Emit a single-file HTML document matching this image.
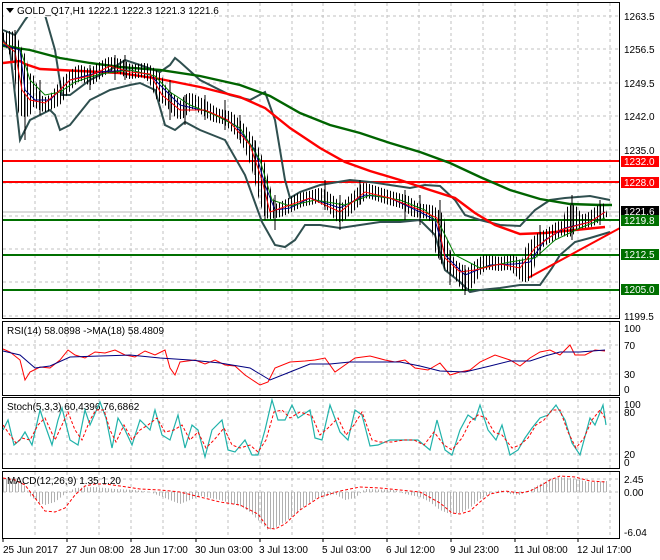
<!DOCTYPE html>
<html><head><meta charset="utf-8"><style>
body{margin:0;background:#fff;width:660px;height:560px;overflow:hidden;font-family:"Liberation Sans",sans-serif}
svg{display:block}
text{font-family:"Liberation Sans",sans-serif;font-size:10px}
</style></head><body>
<svg width="660" height="560" viewBox="0 0 660 560" xmlns="http://www.w3.org/2000/svg">
<defs>
<pattern id="vl" width="3" height="10" patternUnits="userSpaceOnUse"><rect x="0" y="0" width="1" height="10" fill="#000"/></pattern>
<pattern id="gl" width="3" height="10" patternUnits="userSpaceOnUse"><rect x="0" y="0" width="1" height="10" fill="#b0b0b0"/></pattern>
</defs>
<rect width="660" height="560" fill="#fff"/>
<!-- grid -->
<g stroke="#c0c0c0" stroke-dasharray="3,3" stroke-width="1">
<path d="M35 3V318M67 3V318M99 3V318M131 3V318M163 3V318M196 3V318M228 3V318M260 3V318M292 3V318M323 3V318M355 3V318M387 3V318M419 3V318M451 3V318M483 3V318M515 3V318M547 3V318M578 3V318M610 3V318"/>
<path d="M35 322V395M67 322V395M99 322V395M131 322V395M163 322V395M196 322V395M228 322V395M260 322V395M292 322V395M323 322V395M355 322V395M387 322V395M419 322V395M451 322V395M483 322V395M515 322V395M547 322V395M578 322V395M610 322V395"/>
<path d="M35 399V468M67 399V468M99 399V468M131 399V468M163 399V468M196 399V468M228 399V468M260 399V468M292 399V468M323 399V468M355 399V468M387 399V468M419 399V468M451 399V468M483 399V468M515 399V468M547 399V468M578 399V468M610 399V468"/>
<path d="M35 472V538M67 472V538M99 472V538M131 472V538M163 472V538M196 472V538M228 472V538M260 472V538M292 472V538M323 472V538M355 472V538M387 472V538M419 472V538M451 472V538M483 472V538M515 472V538M547 472V538M578 472V538M610 472V538"/>
<path d="M3 16H620M3 49H620M3 83H620M3 116H620M3 150H620M3 183H620M3 216H620M3 249H620M3 282H620M3 316H620"/>
<path d="M3 345H620M3 374H620M3 412H620M3 454H620M3 479H620M3 492H620"/>
</g>
<path d="M3 212H620" stroke="#b8b8b8" stroke-width="1"/>
<!-- horizontal levels -->
<g stroke-width="2">
<path d="M3 161H620M3 182H620" stroke="#ff0000"/>
<path d="M3 220H620M3 255H620M3 290H620" stroke="#007000"/>
</g>
<!-- bollinger bands -->
<g fill="none" stroke="#2f4f4f" stroke-width="2">
<polyline points="3,30 15,35 25,20 35,6 45,15 55,50 62,95 70,95 90,80 110,70 125,60 140,65 160,72 170,65 175,58 180,62 200,80 230,95 250,100 265,92 275,120 285,180 290,198 300,192 320,185 350,180 370,182 390,185 410,188 425,185 440,186 455,200 465,215 480,220 500,225 520,226 535,210 550,200 565,198 590,196 610,200"/>
<polyline points="3,40 10,50 20,140 25,130 30,120 40,115 50,110 55,115 60,130 70,125 90,100 110,90 130,85 140,83 155,90 165,125 175,130 185,122 200,130 225,140 245,175 262,222 275,245 285,247 295,240 305,225 320,225 340,228 360,225 380,222 400,222 420,220 435,235 445,270 460,282 470,292 480,290 500,288 520,285 540,285 552,268 560,255 575,242 590,238 610,232"/>
</g>
<!-- green 200 MA -->
<polyline fill="none" stroke="#006400" stroke-width="2.4" points="3,46 30,50 60,58 90,63 120,67 160,70 200,76 240,85 270,96 300,113 330,125 360,133 390,143 420,152 450,163 480,177 510,190 540,199 570,204 600,205 612,205"/>
<!-- red MA -->
<polyline fill="none" stroke="#ff0000" stroke-width="2.4" points="3,63 20,61 25,64 40,69 80,71 120,73 160,79 200,87 240,97 265,108 290,128 320,148 345,162 370,171 400,180 430,190 455,198 475,213 495,225 520,234 545,233 575,230 605,227"/>
<path d="M528,278 L620,228" stroke="#ff0000" stroke-width="2"/>
<!-- candles via pattern-stroke -->
<polyline fill="none" stroke="url(#vl)" stroke-width="14" stroke-linejoin="round" points="3,40 10,38 15,50 20,60 25,110 28,80 35,100 45,105 55,100 62,90 70,80 80,72 90,78 100,70 110,64 120,66 130,72 145,70 155,78 162,95 170,100 180,112 190,100 200,105 215,115 228,118 240,130 250,145 258,165 265,195 270,212 280,210 290,205 300,200 310,198 320,195 330,202 340,215 350,205 365,190 375,193 390,198 405,202 415,210 430,212 437,218 442,250 450,265 458,270 466,284 475,270 485,262 500,264 512,262 525,275 532,250 540,240 550,235 560,228 568,230 572,212 578,222 590,220 600,212 606,210"/>
<!-- fast MAs -->
<polyline fill="none" stroke="#00008b" stroke-width="1" points="3,45 20,50 25,90 35,100 50,100 60,90 70,80 100,72 130,70 150,75 165,90 180,105 210,112 235,125 255,150 265,185 275,210 290,208 310,198 340,208 365,195 390,198 420,212 435,220 445,255 465,275 490,265 515,264 530,262 545,240 565,228 590,222 605,212"/>
<polyline fill="none" stroke="#008000" stroke-width="1" points="3,44 20,48 30,80 45,95 60,92 75,82 100,74 130,70 155,76 170,92 190,105 215,115 240,128 260,160 272,200 290,206 315,200 345,205 370,195 400,200 425,210 440,225 455,255 480,268 510,262 535,258 555,240 580,228 605,218"/>
<polyline fill="none" stroke="#ff0000" stroke-width="1" points="3,42 15,52 22,90 30,100 45,103 58,92 70,80 90,76 110,66 130,72 150,74 162,95 180,110 205,110 228,120 250,145 262,180 270,212 290,205 310,198 340,212 365,192 390,198 420,210 437,218 445,258 460,272 475,270 500,264 520,268 535,248 560,230 590,222 605,212"/>
<g stroke="#000" stroke-width="1">
<path d="M15 30V70M25 95V140M40 80V115M90 65V90M115 55V80M125 55V80M170 80V120M185 95V125M205 95V120M225 100V130M240 115V140M255 140V175M265 180V220M275 195V230M325 180V210M340 195V230M360 180V205M405 190V220M420 195V225M440 200V260M450 250V285M465 265V295M540 225V255M572 195V240M600 200V225"/>
</g>
<!-- panel borders -->
<g fill="none" stroke="#000" stroke-width="1">
<rect x="2.5" y="2.5" width="617" height="316"/>
<rect x="2.5" y="321.5" width="617" height="74"/>
<rect x="2.5" y="397.5" width="617" height="71"/>
<rect x="2.5" y="471.5" width="617" height="67"/>
</g>
<rect x="4" y="4" width="210" height="13" fill="#fff"/>
<path d="M6 8h8l-4 5z" fill="#000"/>
<text x="17" y="14">GOLD_Q17,H1  1222.1 1222.3 1221.3 1221.6</text>
<g font-size="10" fill="#000">
<text x="624" y="20">1263.5</text><text x="624" y="53">1256.5</text><text x="624" y="87">1249.5</text>
<text x="624" y="120">1242.0</text><text x="624" y="154">1235.0</text><text x="624" y="320">1199.5</text>
</g>
<rect x="621" y="156" width="38" height="11" fill="#ff0000"/><text x="624" y="165" fill="#fff">1232.0</text>
<rect x="621" y="177" width="38" height="11" fill="#ff0000"/><text x="624" y="186" fill="#fff">1228.0</text>
<rect x="621" y="206" width="38" height="11" fill="#000"/><text x="624" y="215" fill="#fff">1221.6</text>
<rect x="621" y="215" width="38" height="11" fill="#007000"/><text x="624" y="224" fill="#fff">1219.8</text>
<rect x="621" y="249" width="38" height="11" fill="#007000"/><text x="624" y="258" fill="#fff">1212.5</text>
<rect x="621" y="284" width="38" height="11" fill="#007000"/><text x="624" y="293" fill="#fff">1205.0</text>
<!-- RSI -->
<text x="7" y="334">RSI(14) 58.0898  -&gt;MA(18) 58.4809</text>
<polyline fill="none" stroke="#ff0000" stroke-width="1" points="3,349 10,352 20,360 25,380 30,372 40,367 50,368 60,360 68,350 75,355 85,358 95,352 105,353 115,350 125,355 135,357 145,351 155,355 165,350 170,368 175,375 180,362 195,360 205,364 215,360 225,365 235,366 245,375 260,385 268,382 275,368 290,362 305,361 315,360 325,358 335,372 345,365 355,358 370,356 385,360 395,362 405,360 415,368 428,370 440,363 450,375 460,372 470,370 480,362 495,355 510,360 520,366 530,358 540,352 550,350 560,355 570,345 575,355 585,355 595,350 605,351"/>
<polyline fill="none" stroke="#000080" stroke-width="1" points="3,351 20,355 35,368 50,366 70,357 100,356 130,355 160,358 190,360 220,363 250,368 270,380 290,372 310,364 330,364 350,362 380,362 400,362 420,366 440,371 465,372 490,366 510,361 530,361 545,356 560,352 580,352 605,350"/>
<g font-size="10"><text x="624" y="332">100</text><text x="624" y="349">70</text><text x="624" y="378">30</text><text x="624" y="393">0</text></g>
<!-- Stoch -->
<text x="7" y="410">Stoch(5,3,3) 60,4396 76,6862</text>
<polyline fill="none" stroke="#20b2aa" stroke-width="1.2" points="3,430 8,420 14,445 20,440 25,432 32,445 40,410 45,425 52,445 58,420 62,408 70,440 78,445 85,410 90,425 100,402 106,418 112,448 118,418 125,430 132,445 140,420 150,430 155,410 162,435 170,440 178,415 185,448 192,425 198,430 205,457 212,430 222,420 228,450 235,452 245,440 252,455 258,455 265,430 272,400 278,420 285,420 292,405 298,418 310,410 315,438 322,440 330,405 340,432 348,440 355,410 362,415 370,446 378,445 390,440 400,440 410,440 418,440 430,450 437,420 445,450 452,455 460,430 468,415 475,420 480,405 488,430 496,440 502,425 510,455 518,450 525,438 532,428 540,418 548,415 556,405 565,420 572,443 580,455 590,418 595,425 603,405 606,425"/>
<polyline fill="none" stroke="#ff0000" stroke-width="1" stroke-dasharray="3,2" points="3,425 10,435 16,443 22,438 30,440 38,425 45,418 55,440 62,425 68,412 75,430 82,440 90,420 96,410 104,410 110,430 116,442 124,425 132,440 140,430 148,425 157,418 165,432 174,430 182,425 190,440 198,432 206,448 214,440 224,428 232,445 240,448 250,445 258,452 266,440 274,412 282,410 290,418 300,412 312,416 320,435 328,428 338,418 346,435 354,425 362,412 372,440 380,442 392,442 404,440 414,440 424,445 434,432 444,445 452,450 462,438 470,422 478,415 486,418 494,432 502,435 512,448 520,445 528,438 536,425 544,420 552,410 560,410 568,432 576,448 584,438 592,420 600,410 606,420"/>
<g font-size="10"><text x="624" y="408">100</text><text x="624" y="416">80</text><text x="624" y="458">20</text><text x="624" y="466">0</text></g>
<!-- MACD histogram -->
<polygon fill="url(#gl)" points="3,478 15,480 25,486 30,496 40,503 45,505 55,502 65,494 75,488 95,487 115,489 135,490 150,492 160,496 180,504 200,496 220,500 240,506 250,512 260,522 268,530 275,528 285,522 295,514 305,506 315,499 335,494 345,500 355,498 365,489 395,490 405,494 420,497 430,502 440,510 450,514 460,513 470,508 480,499 490,494 500,490 510,494 520,495 530,490 540,484 550,480 560,477 570,478 590,482 607,481 607,492 3,492"/>
<polyline fill="none" stroke="#ff0000" stroke-width="1" stroke-dasharray="3,2" points="3,478 15,480 25,485 35,498 45,511 55,512 65,508 75,495 85,486 95,484 105,484 120,486 140,489 160,490 180,492 200,497 220,502 240,505 258,514 268,528 275,529 285,524 300,510 320,497 340,491 360,487 380,488 400,490 420,492 440,503 452,513 460,514 470,511 480,502 490,494 505,491 520,493 530,491 540,486 550,480 560,476 575,477 590,481 606,482"/>
<text x="7" y="484">MACD(12,26,9) 1.35 1.20</text>
<g font-size="10"><text x="624" y="483">2.45</text><text x="624" y="496">0.00</text><text x="624" y="536">-6.04</text></g>
<g stroke="#000"><path d="M3 539v3M67 539v3M131 539v3M196 539v3M260 539v3M323 539v3M387 539v3M451 539v3M515 539v3M578 539v3"/></g>
<g font-size="10">
<text x="3" y="553">25 Jun 2017</text><text x="66" y="553">27 Jun 08:00</text><text x="130" y="553">28 Jun 17:00</text>
<text x="195" y="553">30 Jun 03:00</text><text x="259" y="553">3 Jul 13:00</text><text x="322" y="553">5 Jul 03:00</text>
<text x="386" y="553">6 Jul 12:00</text><text x="450" y="553">9 Jul 23:00</text><text x="514" y="553">11 Jul 08:00</text>
<text x="577" y="553">12 Jul 17:00</text>
</g>
</svg>
</body></html>
